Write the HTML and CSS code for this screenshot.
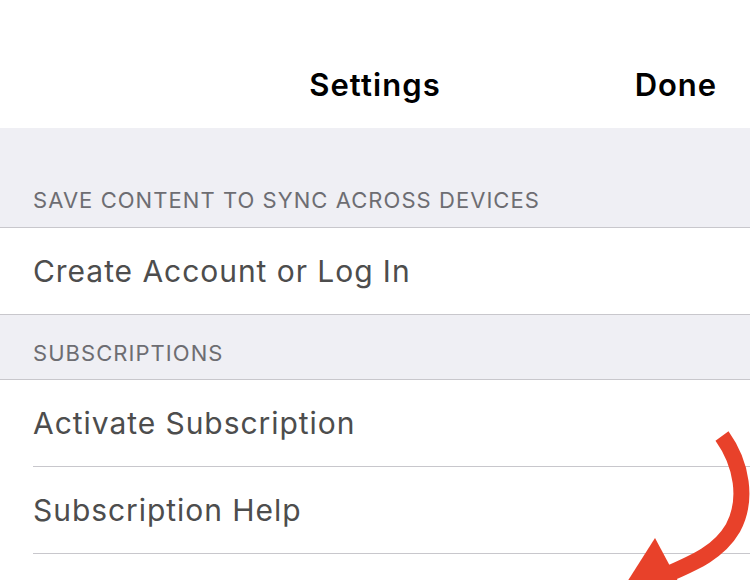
FILE: index.html
```html
<!DOCTYPE html>
<html>
<head>
<meta charset="utf-8">
<link rel="stylesheet" href="styles.css">
</head>
<body>
<div class="screen">
  <header class="navbar">
    <div class="nav-side"></div>
    <h1 class="nav-title">Settings</h1>
    <div class="nav-side nav-right">Done</div>
  </header>
  <div class="group-head tall">SAVE CONTENT TO SYNC ACROSS DEVICES</div>
  <ul class="group">
    <li class="cell">Create Account or Log In</li>
  </ul>
  <div class="group-head">SUBSCRIPTIONS</div>
  <ul class="group open">
    <li class="cell">Activate Subscription</li>
    <li class="cell">Subscription Help</li>
  </ul>
  <svg class="arrow" width="750" height="580" viewBox="0 0 750 580">
    <path d="M722 436 C742 464 748 500 733 528 C719 552 696 562 666 575" fill="none" stroke="#e8412a" stroke-width="16"/>
    <polygon points="655,538 686,596 608,612" fill="#e8412a"/>
  </svg>
</div>
</body>
</html>
```
FILE: styles.css
```css
* { box-sizing: border-box; }
html, body { margin: 0; padding: 0; }
body {
  width: 750px;
  height: 580px;
  overflow: hidden;
  background: #ffffff;
  font-family: Inter, "Noto Sans", sans-serif;
}
.screen {
  position: relative;
  width: 750px;
  height: 580px;
  overflow: hidden;
}
.navbar {
  height: 128px;
  background: #ffffff;
  display: flex;
  align-items: center;
  justify-content: space-between;
  padding: 40px 33px 0 33px;
}
.nav-side { width: 120px; font-size: 31px; font-weight: 600; color: #000; letter-spacing: 0.95px; }
.nav-right { text-align: right; }
.nav-title {
  margin: 0;
  font-size: 31px;
  font-weight: 600;
  color: #000;
  letter-spacing: 1.1px;
}
.group-head {
  background: #efeff4;
  height: 64px;
  padding: 0 33px 13px;
  display: flex;
  align-items: flex-end;
  font-size: 22px;
  color: #6d6d72;
  letter-spacing: 1.05px;
}
.group-head.tall { height: 99px; padding-bottom: 14px; }
.group {
  list-style: none;
  margin: 0;
  padding: 0 0 0 33px;
  background: #fff;
  border-top: 1px solid #c8c7cc;
  border-bottom: 1px solid #c8c7cc;
}
.group.open { border-bottom: none; }
.cell {
  height: 86px;
  display: flex;
  align-items: center;
  font-size: 30px;
  color: #4d4d4d;
  letter-spacing: 0.95px;
}
.cell + .cell { border-top: 1px solid #c8c7cc; height: 87px; }
.group.open .cell:last-child { border-bottom: 1px solid #c8c7cc; height: 88px; }
.arrow { position: absolute; left: 0; top: 0; pointer-events: none; }
```
